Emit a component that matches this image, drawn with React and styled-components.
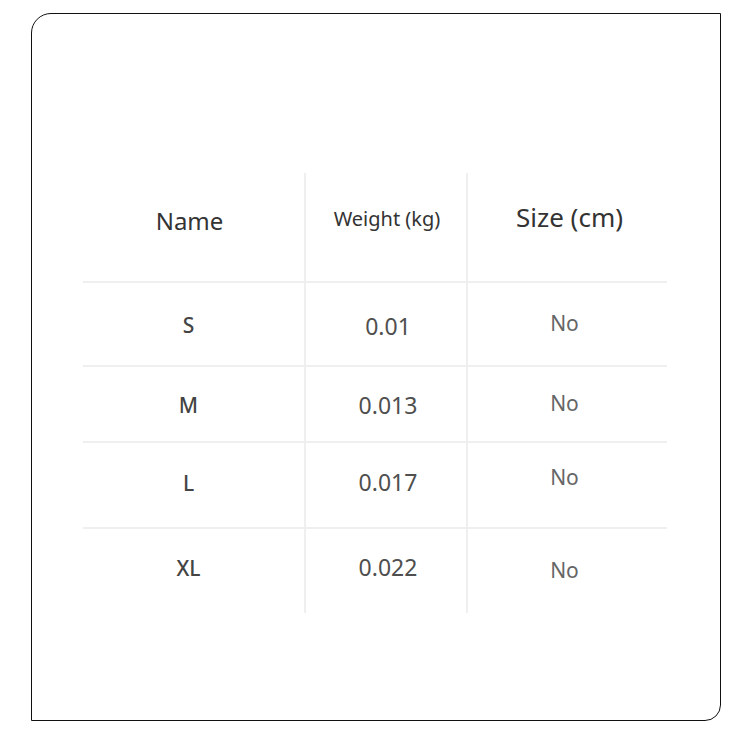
import React from 'react';
import styled, { createGlobalStyle } from 'styled-components';

const GlobalStyle = createGlobalStyle`
    body {
        margin: 0;
        background: #ffffff;
        font-family: "Noto Sans", "Open Sans", sans-serif;
    }
`;

const Card = styled.div`
    box-sizing: border-box;
    margin: 13px 0 0 31px;
    width: 690px;
    height: 708px;
    border: 1.5px solid #111;
    border-radius: 20px 0 16px 0;
    padding: 159px 0 0 51px;
`;

const Table = styled.div`
    display: grid;
    grid-template-columns: 223px 162px 199px;
    grid-template-rows: 110px 84px 76px 86px 84px;
`;

// dx / dy nudge the centred text a few pixels, as in the original photo
const Cell = styled.div`
    display: flex;
    align-items: center;
    justify-content: center;
    box-sizing: border-box;
    border-right: ${(p) => (p.$last ? 'none' : '2px solid #efefef')};
    border-bottom: ${(p) => (p.$bottom ? 'none' : '2.5px solid #efefef')};
    padding-top: ${(p) => Math.max(0, (p.$dy || 0) * 2)}px;
    padding-bottom: ${(p) => Math.max(0, -(p.$dy || 0) * 2)}px;
    padding-left: ${(p) => Math.max(0, (p.$dx || 0) * 2)}px;
    padding-right: ${(p) => Math.max(0, -(p.$dx || 0) * 2)}px;
`;

const Head = styled.span`
    font-size: ${(p) => p.$size}px;
    color: #333;
    white-space: nowrap;
`;

const Label = styled.span`
    font-size: 21px;
    font-weight: 500;
    color: #444;
`;

const Value = styled.span`
    font-size: 23px;
    color: #4f4f4f;
`;

const Flag = styled.span`
    font-size: 21px;
    color: #666;
`;

const rows = [
    { size: 'S', weight: '0.01', flag: 'No', dy: [1, 2, -1] },
    { size: 'M', weight: '0.013', flag: 'No', dy: [1, 1, -1] },
    { size: 'L', weight: '0.017', flag: 'No', dy: [-2, -3, -8] },
    { size: 'XL', weight: '0.022', flag: 'No', dy: [-3, -4, -1] },
];

export default function App() {
    return (
        <>
            <GlobalStyle />
            <Card>
                <Table>
                    <Cell $dy={-7} $dx={-4}>
                        <Head $size={24}>Name</Head>
                    </Cell>
                    <Cell $dy={-9} $dx={1}>
                        <Head $size={20}>Weight (kg)</Head>
                    </Cell>
                    <Cell $last $dy={-10} $dx={2}>
                        <Head $size={26}>Size (cm)</Head>
                    </Cell>
                    {rows.map((r, i) => {
                        const bottom = i === rows.length - 1;
                        return (
                            <React.Fragment key={r.size}>
                                <Cell $bottom={bottom} $dy={r.dy[0]} $dx={-5}>
                                    <Label>{r.size}</Label>
                                </Cell>
                                <Cell $bottom={bottom} $dy={r.dy[1]} $dx={2}>
                                    <Value>{r.weight}</Value>
                                </Cell>
                                <Cell $bottom={bottom} $last $dy={r.dy[2]} $dx={-3}>
                                    <Flag>{r.flag}</Flag>
                                </Cell>
                            </React.Fragment>
                        );
                    })}
                </Table>
            </Card>
        </>
    );
}
